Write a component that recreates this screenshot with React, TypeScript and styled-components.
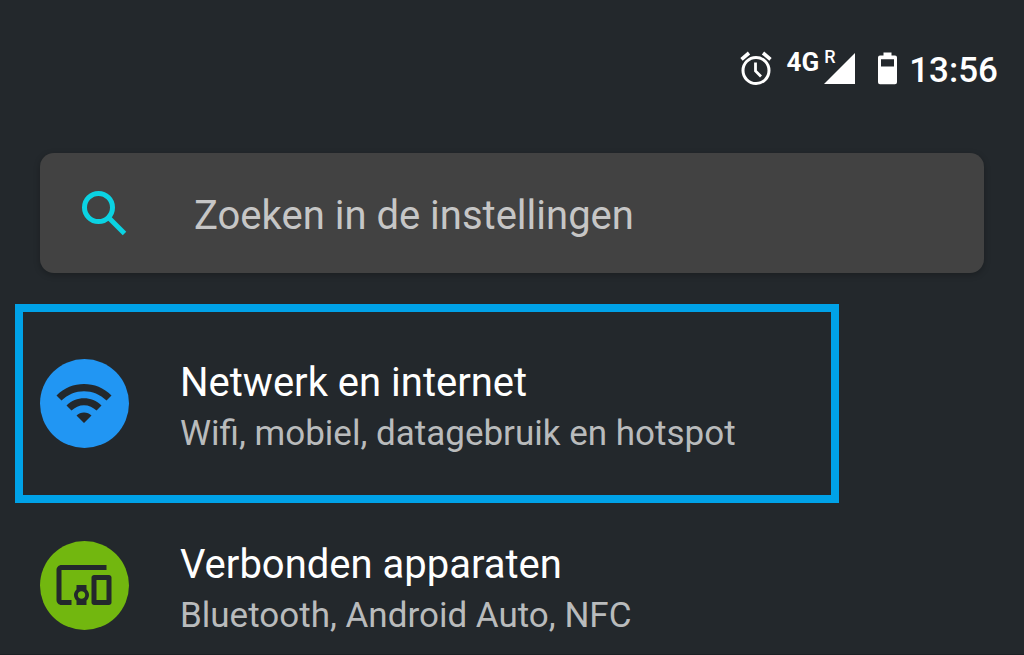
import React from "react";
import styled, { createGlobalStyle } from "styled-components";
import { MdDevicesOther, MdWifi } from "react-icons/md";

const GlobalStyle = createGlobalStyle`
  *, *::before, *::after { box-sizing: border-box; }
  body {
    margin: 0;
    background: #23282c;
    color: #fff;
    font-family: Roboto, "Liberation Sans", sans-serif;
  }
`;

const Screen = styled.div`
  display: flex;
  flex-direction: column;
  min-height: 100vh;
  border-bottom: 1px solid #1b2024;
`;

const StatusBar = styled.header`
  display: flex;
  justify-content: flex-end;
  align-items: flex-start;
  padding: 48px 26px 0 40px;
  height: 153px;
`;

const StatusIcon = styled.svg<{ $gap: number }>`
  flex: none;
  display: block;
  margin-right: ${(p) => p.$gap}px;
`;

const NetworkType = styled.span`
  font-size: 26px;
  line-height: 28px;
  font-weight: 700;
  margin-right: 5px;
`;

const Signal = styled.div`
  position: relative;
  display: flex;
  margin-right: 21px;
`;

const Roaming = styled.span`
  position: absolute;
  left: 0;
  top: 0;
  font-size: 18px;
  line-height: 18px;
  font-weight: 500;
`;

const Clock = styled.time`
  font-size: 35px;
  line-height: 46px;
  font-weight: 500;
`;

const SearchBar = styled.label`
  display: flex;
  align-items: center;
  gap: 60px;
  height: 120px;
  margin: 0 40px;
  padding: 0 34px;
  border-radius: 14px;
  background: #424242;
  box-shadow: 0 2px 6px rgba(0, 0, 0, 0.25);
`;

const SearchIcon = styled.svg`
  flex: none;
  width: 60px;
  height: 60px;
  fill: none;
  stroke: #0bd3e3;
  stroke-width: 5;
`;

const SearchInput = styled.input`
  flex: 1;
  min-width: 0;
  padding: 6px 0 0;
  border: 0;
  outline: 0;
  background: transparent;
  color: #fff;
  font: 400 40px/48px Roboto, "Liberation Sans", sans-serif;
  &::placeholder { color: #c6c6c6; opacity: 1; }
`;

const SettingsList = styled.ul`
  display: flex;
  flex-direction: column;
  gap: 93px;
  list-style: none;
  margin: 0;
  padding: 86px 0 24px;
`;

const SettingsItem = styled.li<{ $highlighted?: boolean }>`
  position: relative;
  ${(p) =>
    p.$highlighted &&
    `&::after {
      content: "";
      position: absolute;
      inset: -55px 185px -55px 15px;
      border: 8px solid #00a2e8;
      pointer-events: none;
    }`}
`;

const SettingsLink = styled.a`
  display: flex;
  align-items: center;
  gap: 51px;
  height: 89px;
  padding: 0 40px;
  color: inherit;
  text-decoration: none;
`;

const Badge = styled.span<{ $color: string }>`
  flex: none;
  width: 89px;
  height: 89px;
  padding: 14px;
  border-radius: 50%;
  background: ${(p) => p.$color};
  color: #23282c;
  svg { display: block; width: 60px; height: 60px; }
`;

const Labels = styled.span`
  display: flex;
  flex-direction: column;
  padding-top: 8px;
  white-space: nowrap;
`;

const Title = styled.span`
  font-size: 40px;
  line-height: 52px;
`;

const Summary = styled.span`
  font-size: 35px;
  line-height: 50px;
  color: #b9bbbc;
`;

const items = [
  {
    title: "Netwerk en internet",
    summary: "Wifi, mobiel, datagebruik en hotspot",
    color: "#2196f3",
    Icon: MdWifi,
    highlighted: true,
  },
  {
    title: "Verbonden apparaten",
    summary: "Bluetooth, Android Auto, NFC",
    color: "#72b70f",
    Icon: MdDevicesOther,
    highlighted: false,
  },
];

export default function App() {
  return (
    <Screen>
      <GlobalStyle />
      <StatusBar>
        <StatusIcon $gap={15} width="32" height="40" viewBox="0 0 32 40" fill="none" stroke="#fff" aria-label="Wekker">
          <circle cx="16" cy="22.500" r="13" strokeWidth="3" />
          <path d="M1.500 11.300 9 5M30.500 11.300 23 5" strokeWidth="3.600" />
          <path d="M15.500 14.500v8.500l5.500 5.500" strokeWidth="2.800" />
        </StatusIcon>
        <NetworkType>4G</NetworkType>
        <Signal>
          <Roaming>R</Roaming>
          <StatusIcon $gap={0} width="32" height="40" viewBox="0 0 32 40" aria-label="Signaal">
            <path d="M0 36 31 5v31z" fill="#fff" />
          </StatusIcon>
        </Signal>
        <StatusIcon $gap={12} width="20" height="40" viewBox="0 0 20 40" aria-label="Batterij">
          <path
            d="M6.500 4.500h8v3h3.500a2 2 0 0 1 2 2v24.800a2 2 0 0 1-2 2H3a2 2 0 0 1-2-2V9.500a2 2 0 0 1 2-2h3.500zM4 11.200v7.200h13v-7.200z"
            fill="#fff"
            fillRule="evenodd"
          />
        </StatusIcon>
        <Clock>13:56</Clock>
      </StatusBar>
      <main>
        <SearchBar>
          <SearchIcon viewBox="0 0 60 60" aria-hidden>
            <circle cx="24.500" cy="24.500" r="14" />
            <path d="M34 34l16.500 16.500" />
          </SearchIcon>
          <SearchInput type="search" placeholder="Zoeken in de instellingen" />
        </SearchBar>
        <SettingsList>
          {items.map(({ title, summary, color, Icon, highlighted }) => (
            <SettingsItem key={title} $highlighted={highlighted}>
              <SettingsLink href="#">
                <Badge $color={color}>
                  <Icon aria-hidden />
                </Badge>
                <Labels>
                  <Title>{title}</Title>
                  <Summary>{summary}</Summary>
                </Labels>
              </SettingsLink>
            </SettingsItem>
          ))}
        </SettingsList>
      </main>
    </Screen>
  );
}
